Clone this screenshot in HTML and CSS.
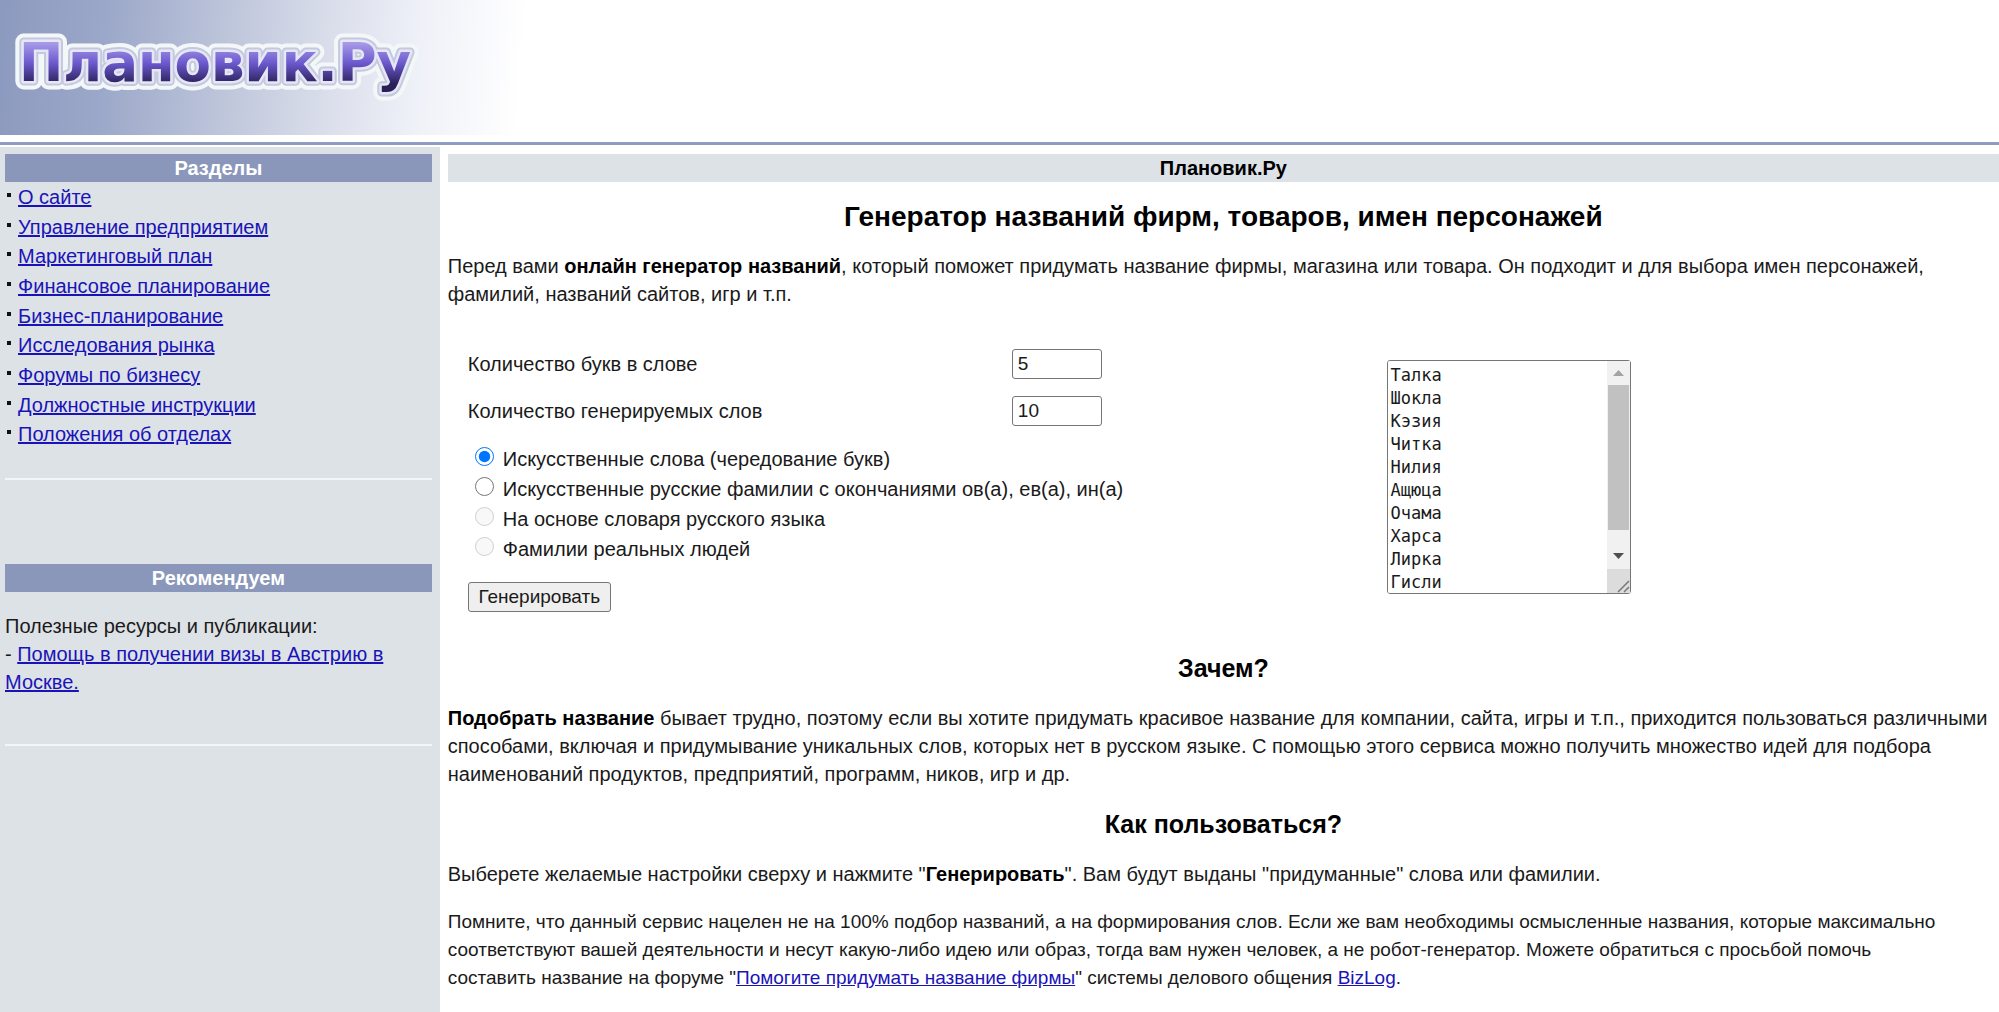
FILE: index.html
```html
<!DOCTYPE html>
<html lang="ru">
<head>
<meta charset="utf-8">
<title>Генератор названий фирм, товаров, имен персонажей</title>
<link rel="stylesheet" href="styles.css">
</head>
<body>
<header class="masthead">
  <svg class="logo" width="525" height="135" viewBox="0 0 525 135" role="img" aria-label="Плановик.Ру">
    <defs>
      <linearGradient id="sky" gradientUnits="userSpaceOnUse" x1="0" y1="60" x2="520" y2="100">
        <stop offset="0" stop-color="#8d9abf"/>
        <stop offset=".2" stop-color="#9ca8c9"/>
        <stop offset=".42" stop-color="#bcc4da"/>
        <stop offset=".62" stop-color="#d9ddea"/>
        <stop offset=".8" stop-color="#eff1f8"/>
        <stop offset="1" stop-color="#ffffff"/>
      </linearGradient>
      <linearGradient id="ink" gradientUnits="userSpaceOnUse" x1="0" y1="43" x2="0" y2="84">
        <stop offset="0" stop-color="#a79be8"/>
        <stop offset=".5" stop-color="#6a58cc"/>
        <stop offset="1" stop-color="#2a2058"/>
      </linearGradient>
    </defs>
    <rect width="525" height="135" fill="url(#sky)"/>
    <g class="logo-text">
      <text class="logo-halo" x="19" y="81">Плановик.Ру</text>
      <text class="logo-ring" x="19" y="81">Плановик.Ру</text>
      <text class="logo-edge" x="19" y="81">Плановик.Ру</text>
      <text class="logo-fill" x="19" y="81">Плановик.Ру</text>
    </g>
  </svg>
</header>
<div class="columns">
  <aside class="sidebar">
    <h3 class="side-title">Разделы</h3>
    <ul class="nav">
      <li><a href="#">О сайте</a></li>
      <li><a href="#">Управление предприятием</a></li>
      <li><a href="#">Маркетинговый план</a></li>
      <li><a href="#">Финансовое планирование</a></li>
      <li><a href="#">Бизнес-планирование</a></li>
      <li><a href="#">Исследования рынка</a></li>
      <li><a href="#">Форумы по бизнесу</a></li>
      <li><a href="#">Должностные инструкции</a></li>
      <li><a href="#">Положения об отделах</a></li>
    </ul>
    <hr class="divider">
    <h3 class="side-title side-title-second">Рекомендуем</h3>
    <p class="partners">Полезные ресурсы и публикации:<br>- <a href="#">Помощь в получении визы в Австрию в Москве.</a></p>
    <hr class="divider">
  </aside>
  <main class="content">
    <div class="crumb">Плановик.Ру</div>
    <h1>Генератор названий фирм, товаров, имен персонажей</h1>
    <p>Перед вами <b>онлайн генератор названий</b>, который поможет придумать название фирмы, магазина или товара. Он подходит и для выбора имен персонажей, фамилий, названий сайтов, игр и т.п.</p>
    <form class="generator">
      <div class="settings">
        <div class="field">
          <label for="letters">Количество букв в слове</label>
          <input id="letters" class="number" type="text" value="5">
        </div>
        <div class="field">
          <label for="words">Количество генерируемых слов</label>
          <input id="words" class="number" type="text" value="10">
        </div>
        <div class="options">
          <label class="option"><input type="radio" name="mode" checked><span>Искусственные слова (чередование букв)</span></label>
          <label class="option"><input type="radio" name="mode"><span>Искусственные русские фамилии с окончаниями ов(а), ев(а), ин(а)</span></label>
          <label class="option"><input type="radio" name="mode" disabled><span>На основе словаря русского языка</span></label>
          <label class="option"><input type="radio" name="mode" disabled><span>Фамилии реальных людей</span></label>
        </div>
        <button class="submit" type="button">Генерировать</button>
      </div>
      <div class="result-box">
        <textarea class="result" aria-label="Результат">Талка
Шокла
Кэзия
Читка
Нилия
Ащюца
Очама
Харса
Лирка
Гисли
</textarea>
        <svg class="scrollbar" width="23" height="232" viewBox="0 0 23 232" aria-hidden="true">
          <rect width="23" height="232" fill="#f1f1f1"/>
          <path d="M6 15 11.500 9 17 15z" fill="#a3a3a3"/>
          <rect x="1" y="24" width="21" height="145" fill="#c1c1c1"/>
          <path d="M6 192h11l-5.500 6z" fill="#505050"/>
          <rect y="208" width="23" height="24" fill="#dcdcdc"/>
          <path d="M11 231 22 220M17 231l5-5" stroke="#777" stroke-width="1.500"/>
        </svg>
      </div>
    </form>
    <h2>Зачем?</h2>
    <p><b>Подобрать название</b> бывает трудно, поэтому если вы хотите придумать красивое название для компании, сайта, игры и т.п., приходится пользоваться различными способами, включая и придумывание уникальных слов, которых нет в русском языке. С помощью этого сервиса можно получить множество идей для подбора наименований продуктов, предприятий, программ, ников, игр и др.</p>
    <h2>Как пользоваться?</h2>
    <p>Выберете желаемые настройки сверху и нажмите "<b>Генерировать</b>". Вам будут выданы "придуманные" слова или фамилии.</p>
    <p class="note">Помните, что данный сервис нацелен не на 100% подбор названий, а на формирования слов. Если же вам необходимы осмысленные названия, которые максимально соответствуют вашей деятельности и несут какую-либо идею или образ, тогда вам нужен человек, а не робот-генератор. Можете обратиться с просьбой помочь<br>составить название на форуме "<a href="#">Помогите придумать название фирмы</a>" системы делового общения <a href="#">BizLog</a>.</p>
  </main>
</div>
</body>
</html>
```
FILE: styles.css
```css
* {
  box-sizing: border-box;
}

body {
  margin: 0;
  background: #fff;
  color: #1a1a1a;
  font: 20px/28px "Liberation Sans", Arial, sans-serif;
}

a {
  color: #1a14b8;
}

b {
  color: #000;
}

.masthead {
  height: 145px;
  border-bottom: 3px solid #8f9bc0;
}

.logo {
  display: block;
}

.logo-text {
  font: bold 53px "DejaVu Sans", sans-serif;
  stroke-linejoin: round;
}

.logo-halo {
  fill: #f4f7f8;
  stroke: #f4f7f8;
  stroke-width: 17px;
}

.logo-ring {
  fill: #c3c9de;
  stroke: #c3c9de;
  stroke-width: 9px;
}

.logo-edge {
  fill: #e6e6f6;
  stroke: #e6e6f6;
  stroke-width: 5px;
}

.logo-fill {
  fill: url(#ink);
}

.columns {
  display: grid;
  grid-template-columns: 22% 1fr;
  min-height: calc(100vh - 147px);
  margin-top: 2px;
}

.sidebar {
  padding: 7px 8px 0 5px;
  background: #dde2e7;
}

.side-title {
  margin: 0;
  background: #8a97bb;
  color: #fff;
  font-size: 20px;
  line-height: 28px;
  text-align: center;
}

.side-title-second {
  margin-top: 84px;
}

.nav {
  display: grid;
  grid-auto-rows: 1fr;
  height: 268px;
  margin: 0;
  padding: 1px 0 0;
  list-style: none;
}

.nav li {
  display: flex;
  gap: 7px;
  padding-left: 2px;
  line-height: 29px;
}

.nav li::before {
  width: 4px;
  height: 4px;
  margin-top: 10px;
  background: #111;
  content: "";
}

.divider {
  height: 2px;
  margin: 28px 0 0;
  border: 0;
  background: #f3f5f7;
}

.partners {
  margin: 20px 0 48px;
}

.content {
  padding: 7px 0 16px 8px;
}

.content p {
  margin: 0 0 20px;
}

.content .note {
  font-size: 19px;
}

.crumb {
  background: #dde2e7;
  color: #000;
  font-weight: bold;
  text-align: center;
}

h1,
h2 {
  margin: 20px 0;
  color: #000;
  text-align: center;
}

h1 {
  font-size: 28px;
  line-height: 30px;
}

h2 {
  font-size: 25px;
  line-height: 32px;
}

.generator {
  display: grid;
  grid-template-columns: 60% 1fr;
  padding: 12px 0 20px 20px;
}

.field {
  display: grid;
  grid-template-columns: 59% 90px;
  column-gap: 2px;
  align-items: center;
  height: 47px;
}

.number,
.submit {
  height: 30px;
  border: 1px solid #767676;
  border-radius: 3px;
  color: #1a1a1a;
  font: 19px "Liberation Sans", Arial, sans-serif;
}

.number {
  width: 90px;
  padding: 0 5px;
  background: #fff;
}

.submit {
  display: block;
  width: 143px;
  margin-top: 18px;
  padding: 0;
  background: #efefef;
}

.options {
  margin-top: 10px;
}

.option {
  display: flex;
  gap: 9px;
  padding-left: 7px;
  line-height: 30px;
}

.option input {
  width: 19px;
  height: 19px;
  margin: 3px 0 0;
}

.result-box {
  position: relative;
  justify-self: start;
  align-self: start;
  margin-top: 20px;
}

.result {
  display: block;
  width: 244px;
  height: 234px;
  padding: 3px;
  border: 1px solid #767676;
  border-radius: 3px;
  color: #1a1a1a;
  font: 17px/23px "DejaVu Sans Mono", monospace;
}

.scrollbar {
  position: absolute;
  top: 1px;
  right: 1px;
}
```
